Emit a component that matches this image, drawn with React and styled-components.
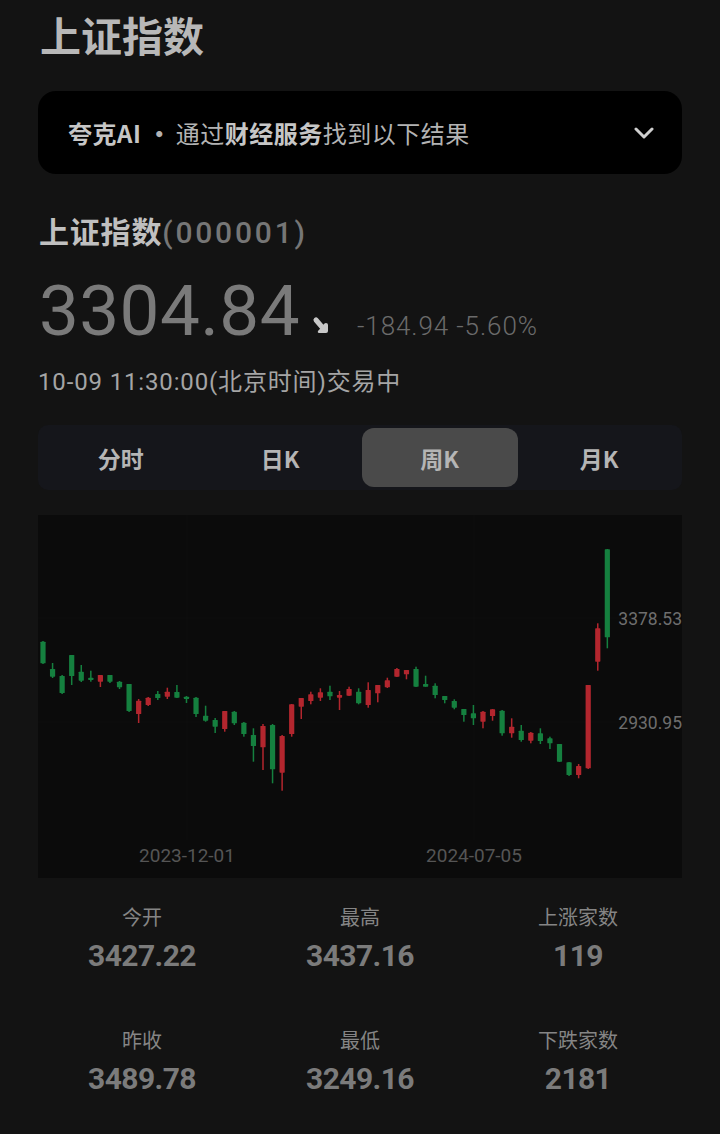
import React from 'react'
import styled, { createGlobalStyle } from 'styled-components'

const GlobalStyle = createGlobalStyle`
  html, body {
    margin: 0;
    padding: 0;
    background: #131313;
  }
  body {
    font-family: Roboto, "Noto Sans CJK SC", sans-serif;
  }
`

const Page = styled.div`
  width: 720px;
  min-height: 1134px;
  box-sizing: border-box;
  padding: 10px 38px 0;
  background: #131313;
`

const Title = styled.h1`
  margin: 0;
  padding-left: 2px;
  font-family: "Noto Sans CJK SC", sans-serif;
  font-size: 41px;
  line-height: 48px;
  font-weight: 700;
  color: #b8b8b8;
`

const AiBar = styled.div`
  margin-top: 33px;
  height: 83px;
  box-sizing: border-box;
  padding: 0 28px 0 30px;
  display: flex;
  align-items: center;
  justify-content: space-between;
  border-radius: 18px;
  background: #000;
`

const AiText = styled.div`
  font-family: "Noto Sans CJK SC", sans-serif;
  font-size: 24px;
  line-height: 32px;
  letter-spacing: 0.5px;
  color: #b3b3b3;
`

const Strong = styled.span`
  font-weight: 700;
  color: #c6c6c6;
`

const Dot = styled.span`
  margin: 0 4px 0 6px;
  font-weight: 700;
  color: #b3b3b3;
`

const Name = styled.div`
  margin-top: 36px;
  padding-left: 1px;
  font-family: "Noto Sans CJK SC", sans-serif;
  font-size: 30px;
  line-height: 40px;
  font-weight: 700;
  letter-spacing: 0.8px;
  color: #c0c0c0;
`

const Code = styled.span`
  font-family: Roboto, "Noto Sans CJK SC", sans-serif;
  font-weight: 500;
  letter-spacing: 2.8px;
  color: #767676;
`

const PriceRow = styled.div`
  margin-top: 18px;
  display: flex;
  align-items: baseline;
  height: 80px;
`

const Price = styled.span`
  padding-left: 1px;
  font-family: Roboto, sans-serif;
  font-size: 71px;
  line-height: 80px;
  font-weight: 400;
  letter-spacing: 0.4px;
  color: #7a7a7a;
`

const TrendIcon = styled.svg`
  margin-left: 12px;
  width: 18px;
  height: 19px;
`

const Change = styled.span`
  margin-left: 27px;
  font-family: Roboto, sans-serif;
  font-size: 26px;
  font-weight: 300;
  letter-spacing: 0.9px;
  color: #6b6b6b;
`

const Stamp = styled.div`
  margin-top: 16px;
  font-size: 24px;
  line-height: 30px;
  letter-spacing: 0.85px;
  color: #a5a5a5;
`

const Tabs = styled.div`
  margin-top: 28px;
  height: 65px;
  box-sizing: border-box;
  padding: 3px;
  display: grid;
  grid-template-columns: repeat(4, 1fr);
  border-radius: 10px;
  background: #15161b;
`

const Tab = styled.div`
  margin: 0 2px;
  display: flex;
  align-items: center;
  justify-content: center;
  border-radius: 12px;
  font-family: "Noto Sans CJK SC", sans-serif;
  font-size: 23px;
  font-weight: 700;
  color: #b5b5b5;
  background: ${props => props.$active ? '#4a4a4a' : 'transparent'};
`

const Chart = styled.div`
  margin-top: 25px;
  height: 363px;
  background: #0b0b0b;
  svg {
    display: block;
  }
`

const Stats = styled.div`
  margin: 25px -5px 0;
  display: grid;
  grid-template-columns: repeat(3, 1fr);
  row-gap: 52px;
`

const Stat = styled.div`
  display: flex;
  flex-direction: column;
  align-items: center;
`

const StatLabel = styled.div`
  font-family: "Noto Sans CJK SC", sans-serif;
  font-size: 20px;
  line-height: 28px;
  color: #858585;
`

const StatValue = styled.div`
  margin-top: 7px;
  font-family: Roboto, sans-serif;
  font-size: 30px;
  line-height: 36px;
  font-weight: 700;
  letter-spacing: -0.6px;
  color: #7b7b7b;
`

// [colour, body top, body bottom, wick top, wick bottom] in page y
const candles = [
  ['g', 641.7, 663.3, 641, 664], ['g', 669, 676.7, 663, 678], ['g', 676, 693, 675, 694],
  ['g', 655, 676, 655, 685], ['g', 671.7, 680.7, 665, 682], ['g', 677.7, 680, 670.7, 681.7],
  ['r', 675, 681.7, 675, 687], ['g', 675, 681.7, 675, 683], ['g', 681.7, 687.3, 681, 689],
  ['g', 684, 711, 684, 712], ['r', 700.7, 714, 699, 723], ['r', 697.7, 705, 697, 706],
  ['g', 694, 698, 691, 700], ['r', 691.7, 696.7, 687.7, 699], ['g', 692, 697.7, 685, 698],
  ['g', 696.7, 699, 696, 703], ['g', 697.7, 714, 697, 717], ['g', 715.7, 720.7, 705.7, 721.7],
  ['g', 720, 726.7, 718, 733], ['r', 711, 729, 711, 731.7], ['g', 711.7, 723.3, 711, 725],
  ['g', 722.7, 734, 722, 736.7], ['g', 735, 746, 728.3, 761.7], ['r', 726, 747.3, 724, 770],
  ['g', 725, 769.3, 724, 783.3], ['r', 736, 772.7, 735, 790.7], ['r', 704.3, 734, 704, 736.7],
  ['r', 698, 706.7, 698, 719], ['r', 694.3, 701, 691.7, 704.3], ['r', 692.3, 697.7, 688.3, 701],
  ['g', 691.7, 696.3, 685.7, 700], ['r', 695, 697.7, 691, 710], ['r', 689, 695.7, 686.7, 696],
  ['g', 691.7, 703.3, 688.3, 704.3], ['r', 690, 705, 682.3, 707.7], ['r', 685, 693.3, 685, 702.3],
  ['r', 680.3, 687.3, 677.7, 688], ['r', 669, 676.7, 668, 677], ['r', 670, 674.3, 670, 679.3],
  ['g', 669, 686.7, 666.7, 687], ['g', 684, 686.7, 675.7, 686.7], ['g', 685.7, 695, 683.3, 698.3],
  ['g', 696, 700, 696, 703.3], ['g', 701, 707.7, 699.3, 709.3], ['g', 709, 715, 709, 721.7],
  ['g', 713.3, 718.3, 705, 725], ['r', 711.7, 721.7, 711, 728.3], ['r', 709.3, 716, 709, 720.7],
  ['g', 710.7, 733.3, 710, 735.7], ['r', 726.7, 733.3, 718.3, 737.7], ['g', 730.7, 740, 725, 741.7],
  ['r', 732.7, 740.7, 732, 743.3], ['g', 733.3, 741, 728.3, 744], ['g', 738.3, 743.3, 736.7, 749],
  ['g', 744, 761.7, 744, 762], ['g', 762.3, 775, 762, 776], ['r', 766, 775, 764, 778.3],
  ['r', 685, 768.3, 685, 769], ['r', 628.3, 661.7, 623.3, 670.7], ['g', 549.3, 637.3, 549, 648.3],
]

const TOP = 515
const colours = { g: '#15803f', r: '#b3262e' }

const CandleChart = () => (
  <svg width="644" height="363" viewBox="0 0 644 363">
    <g stroke="#0f0f0f" strokeWidth="1">
      <line x1="149" y1="0" x2="149" y2="325" />
      <line x1="436" y1="0" x2="436" y2="325" />
      <line x1="0" y1="103" x2="644" y2="103" />
      <line x1="0" y1="207" x2="644" y2="207" />
    </g>
    {candles.map(([c, bt, bb, wt, wb], i) => {
      const cx = 5 + i * 9.565
      return (
        <g key={i} fill={colours[c]}>
          <rect x={cx - 0.75} y={wt - TOP} width="1.5" height={wb - wt} />
          <rect x={cx - 2.6} y={bt - TOP} width="5.2" height={Math.max(bb - bt, 1.5)} rx="0.6" />
        </g>
      )
    })}
    <g fontFamily="Roboto, sans-serif">
      <text x="644" y="110" fontSize="17.5" textAnchor="end" fill="#6e6e6e">3378.53</text>
      <text x="644" y="214" fontSize="17.5" textAnchor="end" fill="#6e6e6e">2930.95</text>
      <text x="149" y="347" fontSize="19" textAnchor="middle" fill="#555">2023-12-01</text>
      <text x="436" y="347" fontSize="19" textAnchor="middle" fill="#555">2024-07-05</text>
    </g>
  </svg>
)

const Chevron = () => (
  <svg width="20" height="12" viewBox="0 0 20 12" fill="none">
    <polyline points="2,2 10,10 18,2" stroke="#cfcfcf" strokeWidth="3" strokeLinecap="round" strokeLinejoin="round" />
  </svg>
)

const tabs = ['分时', '日K', '周K', '月K']

const stats = [
  ['今开', '3427.22'], ['最高', '3437.16'], ['上涨家数', '119'],
  ['昨收', '3489.78'], ['最低', '3249.16'], ['下跌家数', '2181'],
]

export default function App() {
  return (
    <Page>
      <GlobalStyle />
      <Title>上证指数</Title>
      <AiBar>
        <AiText>
          <Strong>夸克AI</Strong>
          <Dot>·</Dot>
          通过<Strong>财经服务</Strong>找到以下结果
        </AiText>
        <Chevron />
      </AiBar>
      <Name>上证指数<Code>(000001)</Code></Name>
      <PriceRow>
        <Price>3304.84</Price>
        <TrendIcon viewBox="0 0 18 19">
          <line x1="4" y1="4" x2="10" y2="11" stroke="#c8c8c8" strokeWidth="5" strokeLinecap="round" />
          <path d="M14 7 Q16 7 16 9 L16 15 Q16 17 14 17 L8 17 Q5 17 6 15 Q9 12 12 8 Q13 7 14 7 Z" fill="#c8c8c8" />
        </TrendIcon>
        <Change>-184.94 -5.60%</Change>
      </PriceRow>
      <Stamp>10-09 11:30:00(北京时间)交易中</Stamp>
      <Tabs>
        {tabs.map(t => <Tab key={t} $active={t === '周K'}>{t}</Tab>)}
      </Tabs>
      <Chart>
        <CandleChart />
      </Chart>
      <Stats>
        {stats.map(([label, value]) => (
          <Stat key={label}>
            <StatLabel>{label}</StatLabel>
            <StatValue>{value}</StatValue>
          </Stat>
        ))}
      </Stats>
    </Page>
  )
}
